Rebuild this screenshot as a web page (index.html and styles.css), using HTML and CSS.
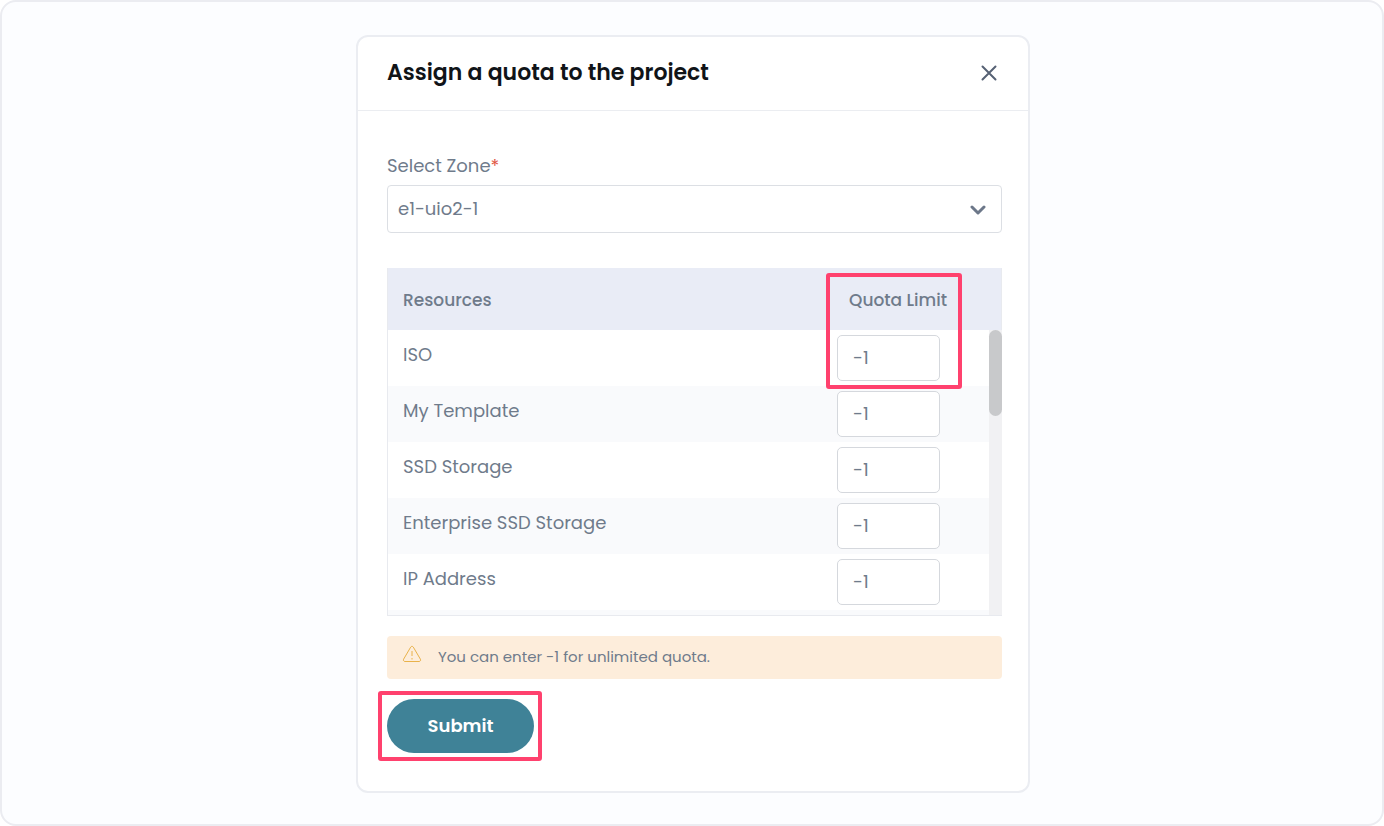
FILE: index.html
```html
<!DOCTYPE html>
<html lang="en">

<head>
    <meta charset="UTF-8">
    <meta name="viewport" content="width=device-width, initial-scale=1.0">
    <title>Assign a quota to the project</title>
    <link rel="stylesheet" href="styles.css">
</head>

<body>
    <main class="page">
        <section class="modal">
            <header class="modal-header">
                <h1>Assign a quota to the project</h1>
                <button class="close" type="button" aria-label="Close">
                    <svg width="16" height="16" viewBox="0 0 16 16">
                        <path d="M1.500 1.500l13 13M14.500 1.500l-13 13" />
                    </svg>
                </button>
            </header>
            <form class="modal-body">
                <label class="label" for="zone">Select Zone<span class="required">*</span></label>
                <div class="select">
                    <select id="zone">
                        <option>e1-uio2-1</option>
                    </select>
                    <svg class="chevron" width="16" height="10" viewBox="0 0 16 10">
                        <path d="M2 2l6 6 6-6" />
                    </svg>
                </div>

                <div class="quota">
                    <table>
                        <thead>
                            <tr>
                                <th>Resources</th>
                                <th class="limit">Quota Limit</th>
                            </tr>
                        </thead>
                        <tbody>
                            <tr>
                                <td><label for="iso">ISO</label></td>
                                <td class="limit"><input id="iso" type="text" value="-1"></td>
                            </tr>
                            <tr>
                                <td><label for="template">My Template</label></td>
                                <td class="limit"><input id="template" type="text" value="-1"></td>
                            </tr>
                            <tr>
                                <td><label for="ssd">SSD Storage</label></td>
                                <td class="limit"><input id="ssd" type="text" value="-1"></td>
                            </tr>
                            <tr>
                                <td><label for="enterprise">Enterprise SSD Storage</label></td>
                                <td class="limit"><input id="enterprise" type="text" value="-1"></td>
                            </tr>
                            <tr>
                                <td><label for="ip">IP Address</label></td>
                                <td class="limit"><input id="ip" type="text" value="-1"></td>
                            </tr>
                            <tr>
                                <td></td>
                                <td class="limit"></td>
                            </tr>
                        </tbody>
                    </table>
                    <div class="scrollbar"><div class="thumb"></div></div>
                    <div class="mark mark-limit"></div>
                </div>

                <div class="alert">
                    <svg width="20" height="20" viewBox="0 0 20 20">
                        <path d="M8.700 2.100L1.600 14.200c-.6 1.100.1 2.300 1.300 2.300h14.200c1.200 0 1.900-1.200 1.300-2.300L11.300 2.100c-.6-1-2-1-2.600 0z" />
                        <path d="M10 6v5M10 13v1.500" />
                    </svg>
                    <span>You can enter -1 for unlimited quota.</span>
                </div>

                <div class="actions">
                    <button class="submit" type="submit">Submit</button>
                    <div class="mark mark-submit"></div>
                </div>
            </form>
        </section>
    </main>
</body>

</html>
```
FILE: styles.css
```css
* {
    box-sizing: border-box;
}

body {
    margin: 0;
    background: #fff;
    color: #6f7b8b;
    font-family: "Poppins", "Inter", sans-serif;
    font-size: 18px;
    line-height: 24px;
}

.page {
    min-height: 100vh;
    padding: 33px 15px 31px 17px;
    border: 2px solid #ebecf1;
    border-radius: 16px;
    background: #fcfdff;
}

.modal {
    max-width: 674px;
    margin: 0 auto;
    border: 2px solid #ebedf2;
    border-radius: 12px;
    background: #fff;
}

.modal-header {
    display: flex;
    align-items: center;
    justify-content: space-between;
    padding: 18px 31px 19px 29px;
    border-bottom: 1px solid #ebedf1;
}

.modal-header h1 {
    margin: 0;
    color: #101418;
    font-size: 22px;
    font-weight: 600;
    line-height: 36px;
}

.close {
    display: flex;
    padding: 0;
    border: 0;
    background: none;
    cursor: pointer;
}

.close svg {
    fill: none;
    stroke: #566174;
    stroke-width: 2;
    stroke-linecap: round;
}

.modal-body {
    padding: 43px 26px 38px 29px;
}

.label {
    display: block;
    margin-bottom: 7px;
}

.required {
    color: #e0533f;
}

.select {
    position: relative;
    margin-bottom: 35px;
}

.select select {
    display: block;
    width: 100%;
    height: 48px;
    padding: 0 40px 0 10px;
    border: 1px solid #dcdfe4;
    border-radius: 4px;
    background: #fff;
    color: inherit;
    font: inherit;
    appearance: none;
}

.chevron {
    position: absolute;
    top: 20px;
    right: 16px;
    fill: none;
    stroke: #6c7789;
    stroke-width: 3;
    stroke-linecap: round;
    stroke-linejoin: round;
    pointer-events: none;
}

/* resources table */
.quota {
    position: relative;
    margin-bottom: 20px;
}

table {
    display: block;
    border: 1px solid #e8eaef;
    border-top: 0;
}

thead,
tbody {
    display: block;
}

tbody {
    height: 285px;
    overflow: hidden;
}

tr {
    display: flex;
    height: 56px;
}

thead tr {
    height: 62px;
    background: #e9ecf6;
}

tbody tr:nth-child(even) {
    background: #f9fafc;
}

th,
td {
    flex: 1;
    padding: 13px 15px;
    text-align: left;
}

th {
    padding-top: 20px;
    font-size: 17px;
    font-weight: 500;
}

th.limit,
td.limit {
    flex: 0 0 164px;
}

th.limit {
    padding-left: 12px;
}

td.limit {
    padding: 5px 0;
}

td input {
    display: block;
    width: 103px;
    height: 46px;
    padding: 0 16px 2px 15px;
    border: 1px solid #d5d8dd;
    border-radius: 5px;
    background: #fff;
    color: inherit;
    font: inherit;
}

.scrollbar {
    position: absolute;
    top: 62px;
    right: 0;
    bottom: 1px;
    width: 13px;
    background: #f1f1f3;
}

.thumb {
    height: 86px;
    border-radius: 7px;
    background: #c8c9cb;
}

/* highlight frames */
.mark {
    position: absolute;
    border: 4px solid #ff416e;
    border-radius: 3px;
    pointer-events: none;
}

.mark-limit {
    top: 5px;
    right: 40px;
    width: 136px;
    height: 116px;
}

.mark-submit {
    top: -8px;
    right: -8px;
    bottom: -8px;
    left: -9px;
}

.alert {
    display: flex;
    gap: 16px;
    margin-bottom: 20px;
    padding: 9px 15px 10px;
    border-radius: 4px;
    background: #fdeddb;
    font-size: 15px;
}

.alert svg {
    fill: none;
    stroke: #e9b24a;
}

.actions {
    position: relative;
    width: fit-content;
}

.submit {
    display: block;
    width: 147px;
    height: 54px;
    border: 0;
    border-radius: 27px;
    background: #3f8297;
    color: #fff;
    font: inherit;
    font-weight: 600;
    cursor: pointer;
}
```
